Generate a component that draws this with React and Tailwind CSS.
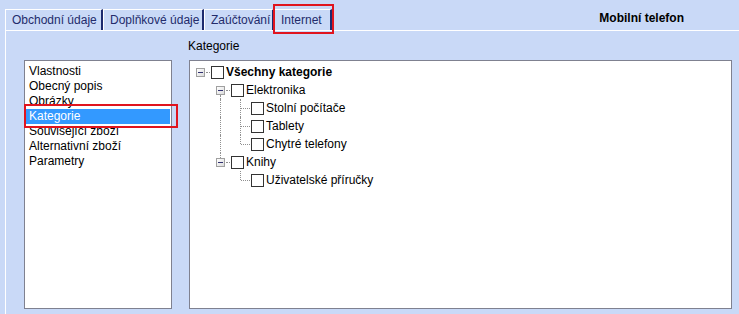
import React from "react";

const font = { fontFamily: '"Liberation Sans", Arial, sans-serif' };

function Tab({ label, w }) {
  return (
    <div
      className={`h-[21px] flex items-center border-l border-t border-white border-r-2 border-r-[#1c2a6e] pl-[6px] text-[12px] text-[#232b6b] whitespace-nowrap ${w}`}
    >
      {label}
    </div>
  );
}

function Expander() {
  return (
    <div className="w-[9px] h-[9px] border border-[#a0a0a0] bg-gradient-to-br from-white to-[#dcdcdc] flex items-center justify-center">
      <div className="w-[5px] h-[1px] bg-[#303070]" />
    </div>
  );
}

function Checkbox() {
  return <div className="w-[13px] h-[13px] border border-[#333] bg-white shrink-0" />;
}

function Cell({ type }) {
  return (
    <div className="relative w-[20px] h-[18px] shrink-0">
      {type === "vline" && (
        <div className="absolute left-[10px] top-0 h-[18px] border-l border-dotted border-[#909090]" />
      )}
      {type === "elbow" && (
        <>
          <div className="absolute left-[10px] top-0 h-[9px] border-l border-dotted border-[#909090]" />
          <div className="absolute left-[11px] top-[9px] w-[9px] border-t border-dotted border-[#909090]" />
        </>
      )}
      {type === "tee" && (
        <>
          <div className="absolute left-[10px] top-0 h-[18px] border-l border-dotted border-[#909090]" />
          <div className="absolute left-[11px] top-[9px] w-[9px] border-t border-dotted border-[#909090]" />
        </>
      )}
      {(type === "exp" || type === "exp-down" || type === "exp-up") && (
        <>
          {type === "exp-down" && (
            <div className="absolute left-[10px] top-[14px] h-[4px] border-l border-dotted border-[#909090]" />
          )}
          {type === "exp-up" && (
            <div className="absolute left-[10px] top-0 h-[5px] border-l border-dotted border-[#909090]" />
          )}
          <div className="absolute left-[6px] top-[5px]">
            <Expander />
          </div>
          <div className="absolute left-[16px] top-[9px] w-[4px] border-t border-dotted border-[#909090]" />
        </>
      )}
    </div>
  );
}

function Row({ cells, label, bold }) {
  return (
    <div className="flex items-center h-[18px]">
      {cells.map((c, i) => (
        <Cell key={i} type={c} />
      ))}
      <div className="ml-[1px]">
        <Checkbox />
      </div>
      <span className={`ml-[2px] text-[12px] text-black whitespace-nowrap ${bold ? "font-bold" : ""}`}>
        {label}
      </span>
    </div>
  );
}

export default function App() {
  const items = [
    "Vlastnosti",
    "Obecný popis",
    "Obrázky",
    "Kategorie",
    "Související zboží",
    "Alternativní zboží",
    "Parametry",
  ];
  return (
    <div className="relative w-[739px] h-[314px] bg-[#c9d9f7] overflow-hidden" style={font}>
      {/* header */}
      <div className="flex items-end h-[30px] pl-[5px]">
        <Tab label="Obchodní údaje" w="w-[98px]" />
        <Tab label="Doplňkové údaje" w="w-[101px]" />
        <Tab label="Zaúčtování" w="w-[70px]" />
        <Tab label="Internet" w="w-[58px]" />
        <div className="ml-auto self-start mt-[9px] mr-[55px] text-[12px] font-bold text-black">
          Mobilní telefon
        </div>
      </div>
      {/* panel */}
      <div className="ml-[5px] h-[284px] border-l border-t border-white flex">
        <div className="pl-[18px] pt-[29px]">
          <div className="w-[148px] h-[249px] bg-white border border-[#7f8190] pt-[3px] pl-[1px] pr-[1px]">
            {items.map((it) => (
              <div
                key={it}
                className={`h-[15px] leading-[15px] pl-[3px] text-[12px] whitespace-nowrap ${
                  it === "Kategorie" ? "bg-[#3399ff] text-white" : "text-black"
                }`}
              >
                {it}
              </div>
            ))}
          </div>
        </div>
        <div className="pl-[17px] pt-[8px] flex flex-col">
          <div className="text-[12px] text-black leading-[14px] h-[21px] -ml-[1px]">Kategorie</div>
          <div className="w-[543px] h-[249px] bg-white border border-[#7f8190] pt-[2px]">
            <Row cells={["exp"]} label="Všechny kategorie" bold />
            <Row cells={["empty", "exp-down"]} label="Elektronika" />
            <Row cells={["empty", "vline", "tee"]} label="Stolní počítače" />
            <Row cells={["empty", "vline", "tee"]} label="Tablety" />
            <Row cells={["empty", "vline", "elbow"]} label="Chytré telefony" />
            <Row cells={["empty", "exp-up"]} label="Knihy" />
            <Row cells={["empty", "empty", "elbow"]} label="Uživatelské příručky" />
          </div>
        </div>
      </div>
      {/* annotation boxes */}
      <div className="absolute left-[273px] top-[4px] w-[61px] h-[30px] border-2 border-[#e0141e]" />
      <div className="absolute left-[24px] top-[104px] w-[154px] h-[24px] border-2 border-[#e0141e]" />
    </div>
  );
}
